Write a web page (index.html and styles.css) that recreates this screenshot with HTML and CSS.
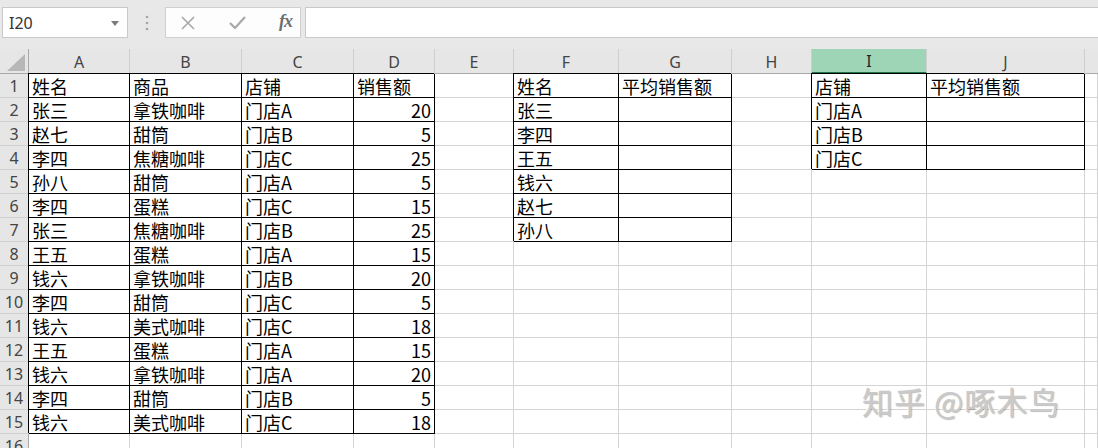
FILE: index.html
```html
<!DOCTYPE html>
<html lang="zh">
<head>
<meta charset="utf-8">
<link rel="stylesheet" href="styles.css">
</head>
<body>
<div class="toolbar">
  <div class="namebox">
    <span class="nb-text">I20</span>
    <svg class="nb-arrow" width="8" height="5" viewBox="0 0 8 5"><path d="M0 0h8L4 5z" fill="#7a7a7a"/></svg>
  </div>
  <div class="dots">
    <svg width="4" height="16" viewBox="0 0 4 16"><circle cx="2" cy="2" r="1.3" fill="#a6a6a6"/><circle cx="2" cy="8" r="1.3" fill="#a6a6a6"/><circle cx="2" cy="14" r="1.3" fill="#a6a6a6"/></svg>
  </div>
  <div class="fbtns">
    <svg class="ic-x" width="14" height="14" viewBox="0 0 14 14"><path d="M1 1L13 13M13 1L1 13" stroke="#a8a8a8" stroke-width="1.6" fill="none"/></svg>
    <svg class="ic-ok" width="17" height="13" viewBox="0 0 17 13"><path d="M1 7l5 5L16 1" stroke="#a8a8a8" stroke-width="2.2" fill="none"/></svg>
    <span class="fx">fx</span>
  </div>
  <div class="finput"></div>
</div>

<div class="sheet">
  <div class="ch corner"><svg width="18" height="17" viewBox="0 0 18 17"><path d="M18 0V17H0z" fill="#b7b7b7"/></svg></div>
  <div class="ch">A</div><div class="ch">B</div><div class="ch">C</div><div class="ch">D</div><div class="ch">E</div><div class="ch">F</div><div class="ch">G</div><div class="ch">H</div><div class="ch sel">I</div><div class="ch">J</div><div class="ch last"></div>

  <div class="rh">1</div><div class="c b">姓名</div><div class="c b">商品</div><div class="c b">店铺</div><div class="c b">销售额</div><div class="c"></div><div class="c b">姓名</div><div class="c b">平均销售额</div><div class="c"></div><div class="c b">店铺</div><div class="c b">平均销售额</div><div class="c"></div>
  <div class="rh">2</div><div class="c b">张三</div><div class="c b">拿铁咖啡</div><div class="c b">门店A</div><div class="c b n">20</div><div class="c"></div><div class="c b">张三</div><div class="c b"></div><div class="c"></div><div class="c b">门店A</div><div class="c b"></div><div class="c"></div>
  <div class="rh">3</div><div class="c b">赵七</div><div class="c b">甜筒</div><div class="c b">门店B</div><div class="c b n">5</div><div class="c"></div><div class="c b">李四</div><div class="c b"></div><div class="c"></div><div class="c b">门店B</div><div class="c b"></div><div class="c"></div>
  <div class="rh">4</div><div class="c b">李四</div><div class="c b">焦糖咖啡</div><div class="c b">门店C</div><div class="c b n">25</div><div class="c"></div><div class="c b">王五</div><div class="c b"></div><div class="c"></div><div class="c b">门店C</div><div class="c b"></div><div class="c"></div>
  <div class="rh">5</div><div class="c b">孙八</div><div class="c b">甜筒</div><div class="c b">门店A</div><div class="c b n">5</div><div class="c"></div><div class="c b">钱六</div><div class="c b"></div><div class="c"></div><div class="c"></div><div class="c"></div><div class="c"></div>
  <div class="rh">6</div><div class="c b">李四</div><div class="c b">蛋糕</div><div class="c b">门店C</div><div class="c b n">15</div><div class="c"></div><div class="c b">赵七</div><div class="c b"></div><div class="c"></div><div class="c"></div><div class="c"></div><div class="c"></div>
  <div class="rh">7</div><div class="c b">张三</div><div class="c b">焦糖咖啡</div><div class="c b">门店B</div><div class="c b n">25</div><div class="c"></div><div class="c b">孙八</div><div class="c b"></div><div class="c"></div><div class="c"></div><div class="c"></div><div class="c"></div>
  <div class="rh">8</div><div class="c b">王五</div><div class="c b">蛋糕</div><div class="c b">门店A</div><div class="c b n">15</div><div class="c"></div><div class="c"></div><div class="c"></div><div class="c"></div><div class="c"></div><div class="c"></div><div class="c"></div>
  <div class="rh">9</div><div class="c b">钱六</div><div class="c b">拿铁咖啡</div><div class="c b">门店B</div><div class="c b n">20</div><div class="c"></div><div class="c"></div><div class="c"></div><div class="c"></div><div class="c"></div><div class="c"></div><div class="c"></div>
  <div class="rh">10</div><div class="c b">李四</div><div class="c b">甜筒</div><div class="c b">门店C</div><div class="c b n">5</div><div class="c"></div><div class="c"></div><div class="c"></div><div class="c"></div><div class="c"></div><div class="c"></div><div class="c"></div>
  <div class="rh">11</div><div class="c b">钱六</div><div class="c b">美式咖啡</div><div class="c b">门店C</div><div class="c b n">18</div><div class="c"></div><div class="c"></div><div class="c"></div><div class="c"></div><div class="c"></div><div class="c"></div><div class="c"></div>
  <div class="rh">12</div><div class="c b">王五</div><div class="c b">蛋糕</div><div class="c b">门店A</div><div class="c b n">15</div><div class="c"></div><div class="c"></div><div class="c"></div><div class="c"></div><div class="c"></div><div class="c"></div><div class="c"></div>
  <div class="rh">13</div><div class="c b">钱六</div><div class="c b">拿铁咖啡</div><div class="c b">门店A</div><div class="c b n">20</div><div class="c"></div><div class="c"></div><div class="c"></div><div class="c"></div><div class="c"></div><div class="c"></div><div class="c"></div>
  <div class="rh">14</div><div class="c b">李四</div><div class="c b">甜筒</div><div class="c b">门店B</div><div class="c b n">5</div><div class="c"></div><div class="c"></div><div class="c"></div><div class="c"></div><div class="c"></div><div class="c"></div><div class="c"></div>
  <div class="rh">15</div><div class="c b">钱六</div><div class="c b">美式咖啡</div><div class="c b">门店C</div><div class="c b n">18</div><div class="c"></div><div class="c"></div><div class="c"></div><div class="c"></div><div class="c"></div><div class="c"></div><div class="c"></div>
  <div class="rh">16</div><div class="c"></div><div class="c"></div><div class="c"></div><div class="c"></div><div class="c"></div><div class="c"></div><div class="c"></div><div class="c"></div><div class="c"></div><div class="c"></div><div class="c"></div>
</div>

<div class="watermark">知乎 @啄木鸟</div>
</body>
</html>
```

FILE: styles.css
```css
html, body {
  margin: 0;
  padding: 0;
  background: #ffffff;
  overflow: hidden;
  width: 1098px;
  height: 448px;
}
body {
  position: relative;
  font-family: "Noto Sans CJK SC", "Noto Sans", sans-serif;
}

.toolbar {
  height: 49px;
  background: #e8e8e8;
  box-sizing: border-box;
  padding: 7px 0 0 2px;
  display: flex;
  align-items: flex-start;
}
.namebox {
  width: 126px;
  height: 31px;
  box-sizing: border-box;
  background: #fff;
  border: 1px solid #c9c9c9;
  display: flex;
  align-items: center;
  padding: 0 8px 0 6px;
}
.nb-text {
  flex: 1;
  font-family: "Noto Sans", sans-serif;
  font-size: 16px;
  color: #333;
}
.nb-arrow { margin-top: 1px; }
.dots {
  width: 37px;
  height: 31px;
  display: flex;
  align-items: center;
  justify-content: center;
}
.fbtns {
  width: 136px;
  height: 31px;
  box-sizing: border-box;
  background: #fdfdfd;
  border: 1px solid #cfcfcf;
  display: flex;
  align-items: center;
  padding-left: 15px;
}
.ic-x { margin-right: 34px; }
.ic-ok { margin-right: 33px; }
.fx {
  font-family: "Liberation Serif", serif;
  font-style: italic;
  font-weight: bold;
  font-size: 18px;
  color: #6e6e6e;
  letter-spacing: -1px;
  margin-top: -3px;
}
.finput {
  flex: 1;
  margin-left: 4px;
  height: 31px;
  box-sizing: border-box;
  background: #fff;
  border: 1px solid #c9c9c9;
  border-right: none;
}

.sheet {
  display: grid;
  grid-template-columns: 29px 101px 112px 112px 81px 79px 105px 113px 80px 115px 158px 1fr;
  grid-template-rows: 25px;
  grid-auto-rows: 24px;
  height: 399px;
  overflow: hidden;
}
.ch {
  background: #e6e6e6;
  border-right: 1px solid #cfcfcf;
  border-bottom: 1px solid #a9a9a9;
  font-family: "Noto Sans", sans-serif;
  font-size: 16px;
  color: #444;
  display: flex;
  align-items: center;
  justify-content: center;
  padding-top: 1px;
  box-sizing: border-box;
}
.ch.corner {
  align-items: flex-end;
  justify-content: flex-end;
  padding: 0 3px 2px 0;
  border-right-color: #a9a9a9;
}
.ch.sel {
  background: #9fd5b7;
  border-bottom: 2px solid #217346;
  color: #1f1f1f;
}
.ch.last { border-right: none; }

.rh {
  background: #e6e6e6;
  border-right: 1px solid #a9a9a9;
  border-bottom: 1px solid #d0d0d0;
  font-family: "Noto Sans", sans-serif;
  font-size: 16px;
  color: #444;
  display: flex;
  align-items: center;
  justify-content: center;
  padding-top: 1px;
  box-sizing: border-box;
}

.c {
  border-right: 1px solid #d4d4d4;
  border-bottom: 1px solid #d4d4d4;
  box-sizing: border-box;
  padding: 1px 3px 0 3px;
  font-size: 18px;
  line-height: 22px;
  color: #000;
  white-space: nowrap;
  overflow: hidden;
}
.c.n { text-align: right; }
.c.b {
  border-right-color: #000;
  border-bottom-color: #000;
  box-shadow: -1px -1px 0 0 #000;
  overflow: visible;
}

.watermark {
  position: absolute;
  left: 862px;
  top: 378px;
  font-size: 31px;
  letter-spacing: 1px;
  color: #cacaca;
  text-shadow: 1px 1px 1px rgba(0, 0, 0, 0.25), -1px -1px 0 rgba(255, 255, 255, 0.9);
  white-space: nowrap;
}
```
